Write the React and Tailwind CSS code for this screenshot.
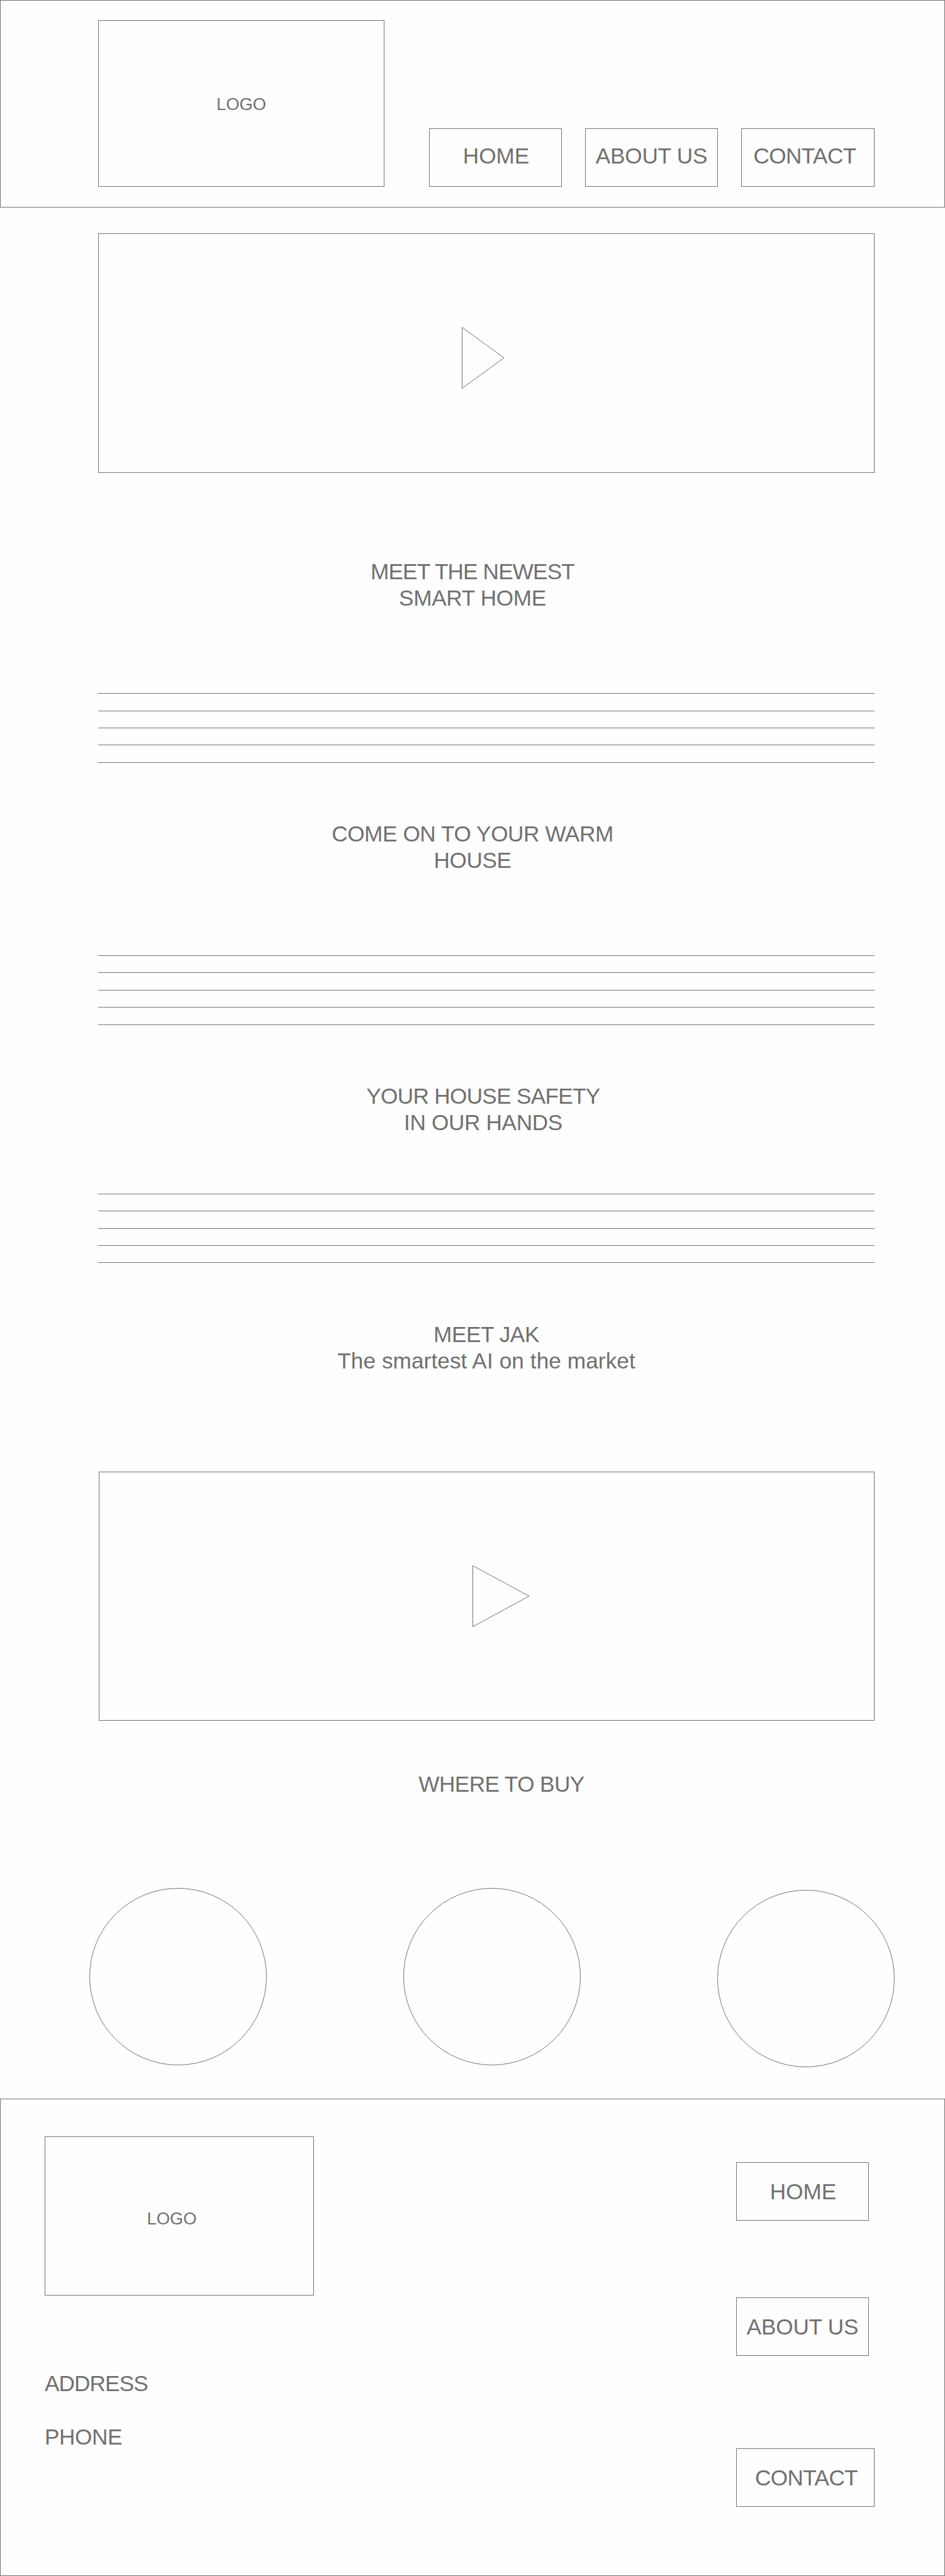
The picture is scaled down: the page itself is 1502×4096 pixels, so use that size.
function Heading({ className = "", children }) {
  return (
    <h2 className={`w-[600px] text-center text-[35.2px] leading-[42.24px] font-normal whitespace-nowrap ${className}`}>
      {children}
    </h2>
  );
}

function TextLines() {
  return (
    <div className="ml-[156px] flex w-[1234px] flex-col gap-[26.38px]">
      {[0, 1, 2, 3, 4].map((n) => (
        <div key={n} className="h-px shrink-0 bg-[#747474]" />
      ))}
    </div>
  );
}

function NavBox({ className = "", children }) {
  return (
    <a className={`flex h-[93px] justify-center border border-[#747474] text-[35.2px] leading-[42px] whitespace-nowrap ${className}`}>
      {children}
    </a>
  );
}

function Play({ width, className }) {
  return (
    <svg className={`block shrink-0 ${className}`} width={width + 4} height="102" fill="none" stroke="#707070">
      <path d={`M1.5 2.5 L${width} 51 L1.5 99.5 Z`} />
    </svg>
  );
}

export default function App() {
  return (
    <div className="flex h-[4096px] w-[1502px] flex-col overflow-hidden bg-[#fefefe] font-['Liberation_Sans',Arial,sans-serif] text-[#707070]">
      <header className="flex h-[330px] shrink-0 border border-[#747474] pt-[31px] pl-[155px]">
        <div className="flex h-[265px] w-[455px] justify-center border border-[#747474] pt-[117px] text-[27.38px] leading-[32px]">
          LOGO
        </div>
        <nav className="mt-[172px] ml-[71px] flex gap-[37px]">
          <NavBox className="w-[211px] pt-[22px] pl-[2px]">HOME</NavBox>
          <NavBox className="w-[211px] pt-[22px] tracking-[-0.2px]">ABOUT US</NavBox>
          <NavBox className="w-[212px] pt-[22px] pr-[10px] tracking-[-0.6px]">CONTACT</NavBox>
        </nav>
      </header>

      <main className="flex h-[3007px] shrink-0 flex-col">
        <div className="mt-[41px] ml-[156px] h-[381px] w-[1234px] shrink-0 border border-[#747474]">
          <Play width={68} className="mt-[146px] ml-[576px]" />
        </div>

        <section className="mt-[136px] h-[417px] shrink-0">
          <Heading className="mb-[129.8px] ml-[451px]">
            <span className="tracking-[-0.87px]">MEET THE NEWEST</span>
            <br />
            <span className="tracking-[-0.33px]">SMART HOME</span>
          </Heading>
          <TextLines />
        </section>

        <section className="h-[417px] shrink-0">
          <Heading className="mb-[129.6px] ml-[451px]">
            <span className="tracking-[-0.43px]">COME ON TO YOUR WARM</span>
            <br />
            <span className="tracking-[-0.4px]">HOUSE</span>
          </Heading>
          <TextLines />
        </section>

        <section className="h-[378.5px] shrink-0">
          <Heading className="mb-[91.3px] ml-[468px]">
            <span className="tracking-[-0.7px]">YOUR HOUSE SAFETY</span>
            <br />
            <span className="tracking-[-0.35px]">IN OUR HANDS</span>
          </Heading>
          <TextLines />
        </section>

        <section className="h-[239.5px] shrink-0">
          <Heading className="ml-[473px]">
            <span className="tracking-[-0.45px]">MEET JAK</span>
            <br />
            <span className="tracking-[0.08px]">The smartest AI on the market</span>
          </Heading>
        </section>

        <div className="ml-[157px] h-[396px] w-[1233px] shrink-0 border border-[#747474]">
          <Play width={91} className="mt-[145.5px] ml-[592px]" />
        </div>

        <Heading className="mt-[79.5px] ml-[497px] h-[42px] shrink-0 tracking-[-0.6px]">WHERE TO BUY</Heading>

        <div className="mt-[144.5px] ml-[141.5px] flex gap-[217px]">
          <div className="size-[282px] rounded-full border border-[#747474]" />
          <div className="size-[282px] rounded-full border border-[#747474]" />
          <div className="mt-[3px] size-[282px] rounded-full border border-[#747474]" />
        </div>
      </main>

      <footer className="flex h-[759px] shrink-0 justify-between border border-[#747474] pr-[111px] pl-[70px]">
        <div className="pt-[59px]">
          <div className="flex h-[253px] w-[428px] justify-center border border-[#747474] pt-[114px] pr-[24px] text-[27.38px] leading-[32px]">
            LOGO
          </div>
          <p className="mt-[119px] text-[35.2px] leading-[42px] tracking-[-0.9px]">ADDRESS</p>
          <p className="mt-[42.5px] text-[35.2px] leading-[42px] tracking-[-0.4px]">PHONE</p>
        </div>
        <nav className="flex w-[220px] flex-col pt-[100px]">
          <NavBox className="w-[211px] pt-[25px] pl-[2px]">HOME</NavBox>
          <NavBox className="mt-[122px] w-[211px] pt-[25px] tracking-[-0.2px]">ABOUT US</NavBox>
          <NavBox className="mt-[147px] w-[220px] pt-[25px] pl-[3px] tracking-[-0.6px]">CONTACT</NavBox>
        </nav>
      </footer>
    </div>
  );
}
